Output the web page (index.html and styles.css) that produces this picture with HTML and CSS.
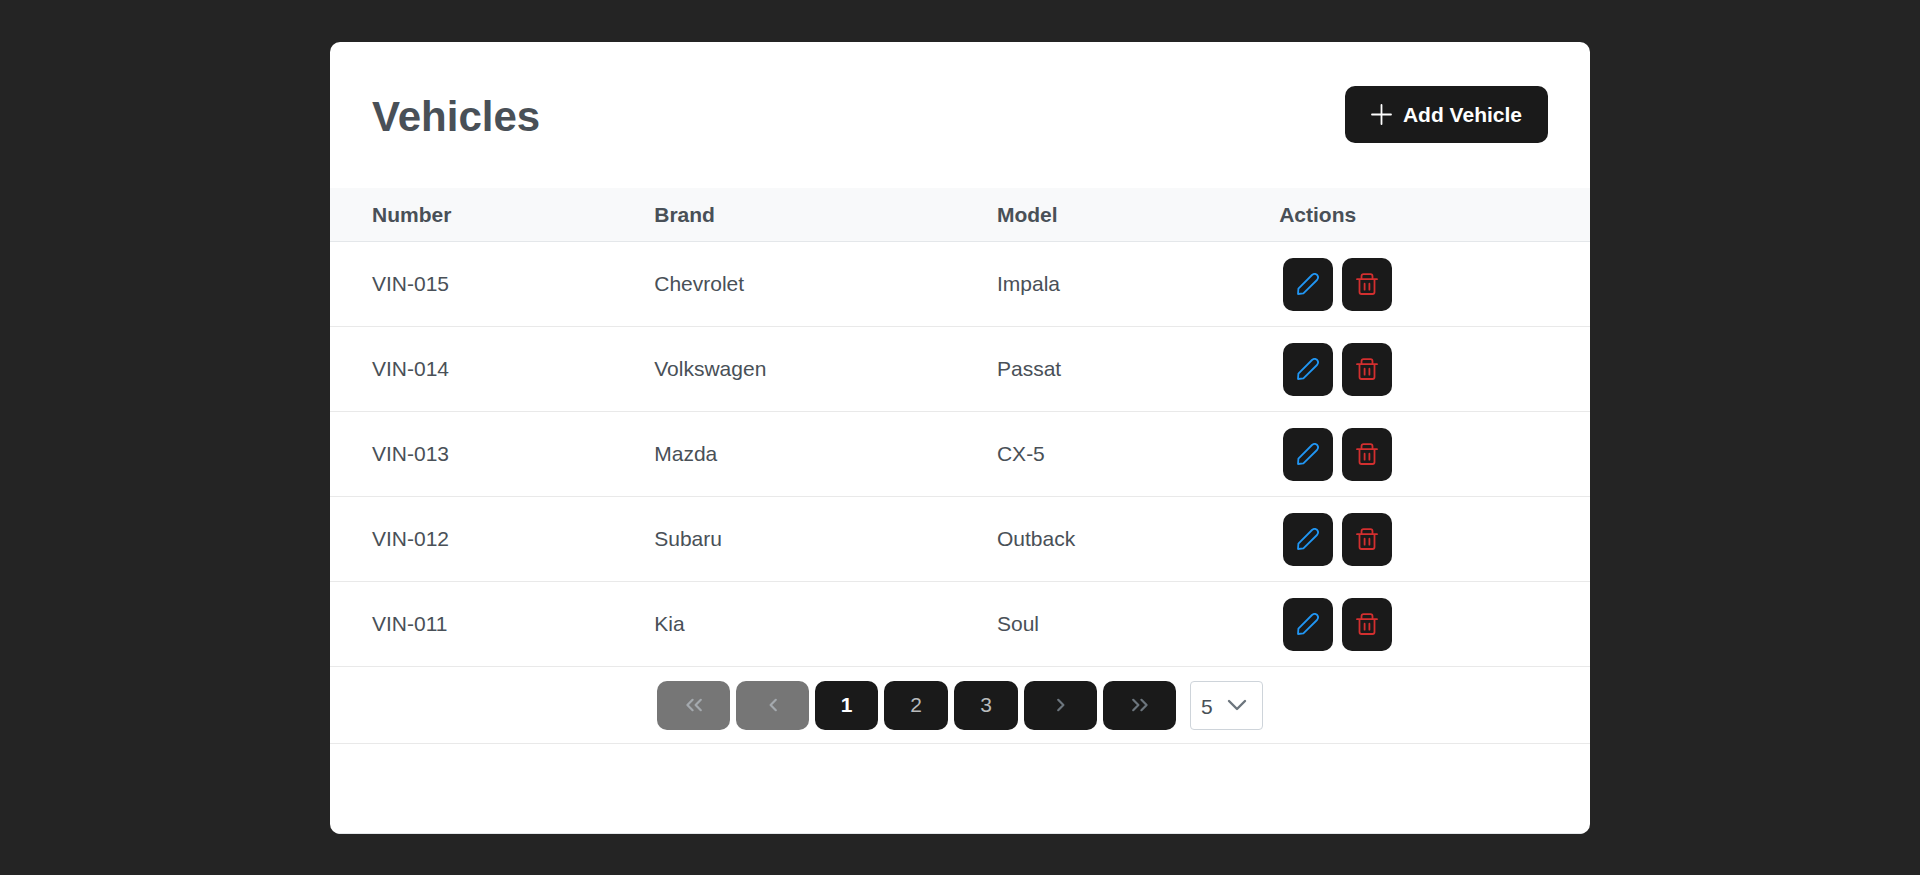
FILE: index.html
```html
<!DOCTYPE html>
<html lang="en">
<head>
<meta charset="utf-8">
<title>Vehicles</title>
<link rel="stylesheet" href="styles.css">
</head>
<body>
<svg class="sprite" aria-hidden="true">
  <symbol id="pencil" viewBox="0 0 22 22"><path d="M1.4 15.6 15 2Q17.6 -.2 20 1.8 22.2 4.2 20 7L6.4 20.4 1 21Z"/></symbol>
  <symbol id="trash" viewBox="0 0 22 22"><path d="M1 6.2h20M3.5 6.2V19q0 2 2 2h11q2 0 2-2V6.2M5.5 6V3.2q0-2 2-2h7q2 0 2 2V6M8.6 10.7v6M13.4 10.7v6"/></symbol>
</svg>
<main class="card">
  <header class="card-header">
    <h1 class="title">Vehicles</h1>
    <button class="btn add" type="button">
      <svg class="icon" viewBox="0 0 21 21" aria-hidden="true"><path d="M10.5 1v19M1 10.5h19"/></svg>
      <span>Add Vehicle</span>
    </button>
  </header>
  <table class="vehicles">
    <colgroup><col class="col-number"><col class="col-brand"><col class="col-model"><col class="col-actions"></colgroup>
    <thead><tr><th scope="col">Number</th><th scope="col">Brand</th><th scope="col">Model</th><th scope="col">Actions</th></tr></thead>
    <tbody>
      <tr><td>VIN-015</td><td>Chevrolet</td><td>Impala</td><td><div class="actions"><button class="btn action edit" type="button" aria-label="Edit VIN-015"><svg class="icon"><use href="#pencil"/></svg></button><button class="btn action delete" type="button" aria-label="Delete VIN-015"><svg class="icon"><use href="#trash"/></svg></button></div></td></tr>
      <tr><td>VIN-014</td><td>Volkswagen</td><td>Passat</td><td><div class="actions"><button class="btn action edit" type="button" aria-label="Edit VIN-014"><svg class="icon"><use href="#pencil"/></svg></button><button class="btn action delete" type="button" aria-label="Delete VIN-014"><svg class="icon"><use href="#trash"/></svg></button></div></td></tr>
      <tr><td>VIN-013</td><td>Mazda</td><td>CX-5</td><td><div class="actions"><button class="btn action edit" type="button" aria-label="Edit VIN-013"><svg class="icon"><use href="#pencil"/></svg></button><button class="btn action delete" type="button" aria-label="Delete VIN-013"><svg class="icon"><use href="#trash"/></svg></button></div></td></tr>
      <tr><td>VIN-012</td><td>Subaru</td><td>Outback</td><td><div class="actions"><button class="btn action edit" type="button" aria-label="Edit VIN-012"><svg class="icon"><use href="#pencil"/></svg></button><button class="btn action delete" type="button" aria-label="Delete VIN-012"><svg class="icon"><use href="#trash"/></svg></button></div></td></tr>
      <tr><td>VIN-011</td><td>Kia</td><td>Soul</td><td><div class="actions"><button class="btn action edit" type="button" aria-label="Edit VIN-011"><svg class="icon"><use href="#pencil"/></svg></button><button class="btn action delete" type="button" aria-label="Delete VIN-011"><svg class="icon"><use href="#trash"/></svg></button></div></td></tr>
    </tbody>
  </table>
  <nav class="paginator" aria-label="Pages">
    <button class="btn page arrow" type="button" disabled aria-label="First page"><svg class="chevron" viewBox="0 0 18 14"><path d="M7.6 1.8 2.4 7l5.2 5.2M15.8 1.8 10.6 7l5.2 5.2"/></svg></button>
    <button class="btn page arrow" type="button" disabled aria-label="Previous page"><svg class="chevron" viewBox="0 0 18 14"><path d="M11.8 1.8 6.6 7l5.2 5.2"/></svg></button>
    <button class="btn page current" type="button" aria-current="page">1</button>
    <button class="btn page" type="button">2</button>
    <button class="btn page" type="button">3</button>
    <button class="btn page arrow" type="button" aria-label="Next page"><svg class="chevron" viewBox="0 0 18 14"><path d="M6.2 1.8 11.4 7l-5.2 5.2"/></svg></button>
    <button class="btn page arrow" type="button" aria-label="Last page"><svg class="chevron" viewBox="0 0 18 14"><path d="M2.2 1.8 7.4 7l-5.2 5.2M10.4 1.8 15.6 7l-5.2 5.2"/></svg></button>
    <div class="rows">
      <select class="rows-select" aria-label="Rows per page"><option>5</option><option>10</option><option>20</option></select>
      <svg class="rows-arrow" viewBox="0 0 20 14" aria-hidden="true"><path d="m2 3 8 8 8-8"/></svg>
    </div>
  </nav>
  <footer class="card-footer"></footer>
</main>
</body>
</html>
```

FILE: styles.css
```css
* { box-sizing: border-box; }

body {
  margin: 0;
  padding: 42px 42px 41px;
  background: #242424;
  color: #495057;
  font-family: "Liberation Sans", Arial, sans-serif;
  font-size: 21px;
  line-height: 32px;
}

.sprite { display: none; }

.card {
  max-width: 1260px;
  margin: 0 auto;
  overflow: hidden;
  background: #fff;
  border-radius: 10px;
}

.card-header {
  display: flex;
  align-items: center;
  justify-content: space-between;
  padding: 44px 42px 45px;
}

.title {
  margin: 0;
  padding-top: 4px;
  font-size: 42px;
  line-height: 52px;
}

.btn {
  display: flex;
  align-items: center;
  justify-content: center;
  margin: 0;
  padding: 0;
  border: 0;
  border-radius: 10px;
  background: #1a1a1a;
  color: #fff;
  font: inherit;
}

.btn svg, .rows-arrow {
  fill: none;
  stroke: currentColor;
  stroke-width: 2;
  stroke-linecap: round;
  stroke-linejoin: round;
}

.btn .icon { width: 22px; height: 22px; stroke-width: 1.8; }

.add {
  gap: 11px;
  height: 57px;
  padding: 0 26px;
  font-weight: 700;
}

.add .icon { width: 21px; height: 21px; }

.vehicles {
  width: 100%;
  table-layout: fixed;
  border-collapse: separate;
  border-spacing: 0;
}

.col-number { width: 22.4%; }
.col-brand { width: 27.2%; }
.col-model { width: 22.4%; }
.col-actions { width: 28%; }

.vehicles th {
  height: 54px;
  padding: 0 0 0 42px;
  background: #f8f9fa;
  border-bottom: 1px solid #e4e7ea;
  text-align: left;
}

.vehicles td {
  height: 85px;
  padding: 0 0 0 42px;
  border-bottom: 1px solid #e9e9e9;
}

.actions { display: flex; gap: 9px; padding-left: 4px; }

.action { width: 50px; height: 53px; }
.edit { color: #2196f3; }
.delete { color: #d32f2f; }

.paginator {
  display: flex;
  align-items: center;
  justify-content: center;
  gap: 6px;
  height: 77px;
  border-bottom: 1px solid #e9e9e9;
}

.page { width: 64px; height: 49px; color: #b9bbbc; }
.arrow { width: 73px; color: #6c757d; }
.page:disabled { background: #767676; color: #a4a9ae; }
.current { width: 63px; color: #fff; font-weight: 700; }
.chevron { width: 18px; height: 14px; }
.page .chevron { stroke-width: 2.2; }

.rows { position: relative; margin-left: 8px; }

.rows-select {
  display: block;
  width: 73px;
  height: 49px;
  padding: 4px 0 0 10px;
  appearance: none;
  background: #fff;
  border: 1px solid #ced4da;
  border-radius: 4px;
  color: #495057;
  font: inherit;
}

.rows-arrow {
  position: absolute;
  top: 17px;
  right: 16px;
  width: 20px;
  height: 14px;
  color: #6c757d;
  stroke-width: 2.4;
  pointer-events: none;
}

.card-footer { height: 90px; border-bottom: 1px solid #e4e7ea; }
```
